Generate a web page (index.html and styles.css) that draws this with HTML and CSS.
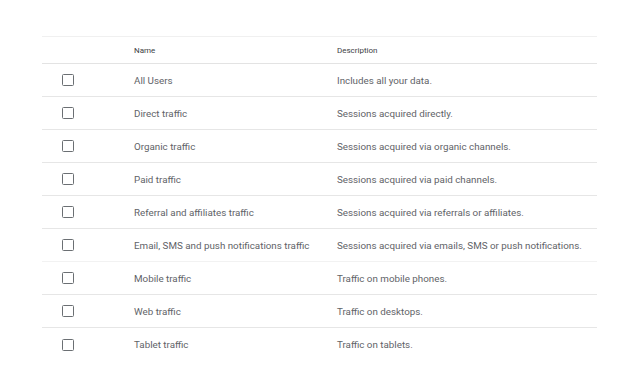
FILE: index.html
```html
<!DOCTYPE html>
<html>
<head>
<meta charset="utf-8">
<link rel="stylesheet" href="styles.css">
</head>
<body>
<div class="table">
  <div class="row head">
    <div class="cell check"></div>
    <div class="cell name">Name</div>
    <div class="cell desc">Description</div>
  </div>
  <div class="row"><div class="cell check"><span class="box"></span></div><div class="cell name">All Users</div><div class="cell desc">Includes all your data.</div></div>
  <div class="row"><div class="cell check"><span class="box"></span></div><div class="cell name">Direct traffic</div><div class="cell desc">Sessions acquired directly.</div></div>
  <div class="row"><div class="cell check"><span class="box"></span></div><div class="cell name">Organic traffic</div><div class="cell desc">Sessions acquired via organic channels.</div></div>
  <div class="row"><div class="cell check"><span class="box"></span></div><div class="cell name">Paid traffic</div><div class="cell desc">Sessions acquired via paid channels.</div></div>
  <div class="row"><div class="cell check"><span class="box"></span></div><div class="cell name">Referral and affiliates traffic</div><div class="cell desc">Sessions acquired via referrals or affiliates.</div></div>
  <div class="row light"><div class="cell check"><span class="box"></span></div><div class="cell name">Email, SMS and push notifications traffic</div><div class="cell desc">Sessions acquired via emails, SMS or push notifications.</div></div>
  <div class="row"><div class="cell check"><span class="box"></span></div><div class="cell name">Mobile traffic</div><div class="cell desc">Traffic on mobile phones.</div></div>
  <div class="row"><div class="cell check"><span class="box"></span></div><div class="cell name">Web traffic</div><div class="cell desc">Traffic on desktops.</div></div>
  <div class="row last"><div class="cell check"><span class="box"></span></div><div class="cell name">Tablet traffic</div><div class="cell desc">Traffic on tablets.</div></div>
</div>
</body>
</html>
```
FILE: styles.css
```css
html, body {
  margin: 0;
  padding: 0;
  background: #fff;
}
body {
  font-family: Roboto, "Liberation Sans", sans-serif;
  padding: 36px 25px 0 42px;
}
.table {
  width: 555px;
  border-top: 1px solid #f0f0f0;
}
.row {
  display: grid;
  grid-template-columns: 92px 203px 1fr;
  height: 33px;
  box-sizing: border-box;
  border-bottom: 1px solid #e6e6e6;
  font-size: 9.8px;
  color: #5f6368;
}
.row.head {
  height: 27px;
  font-size: 8px;
  color: #3c4043;
  border-bottom-color: #e3e3e3;
}
.row.light {
  border-bottom-color: #f2f2f2;
}
.row.last {
  border-bottom: none;
}
.cell {
  display: flex;
  align-items: center;
  white-space: nowrap;
}
.check {
  padding-left: 20px;
}
.box {
  width: 10px;
  height: 10px;
  border: 1.5px solid #6b6f73;
  border-radius: 1.5px;
}
```
